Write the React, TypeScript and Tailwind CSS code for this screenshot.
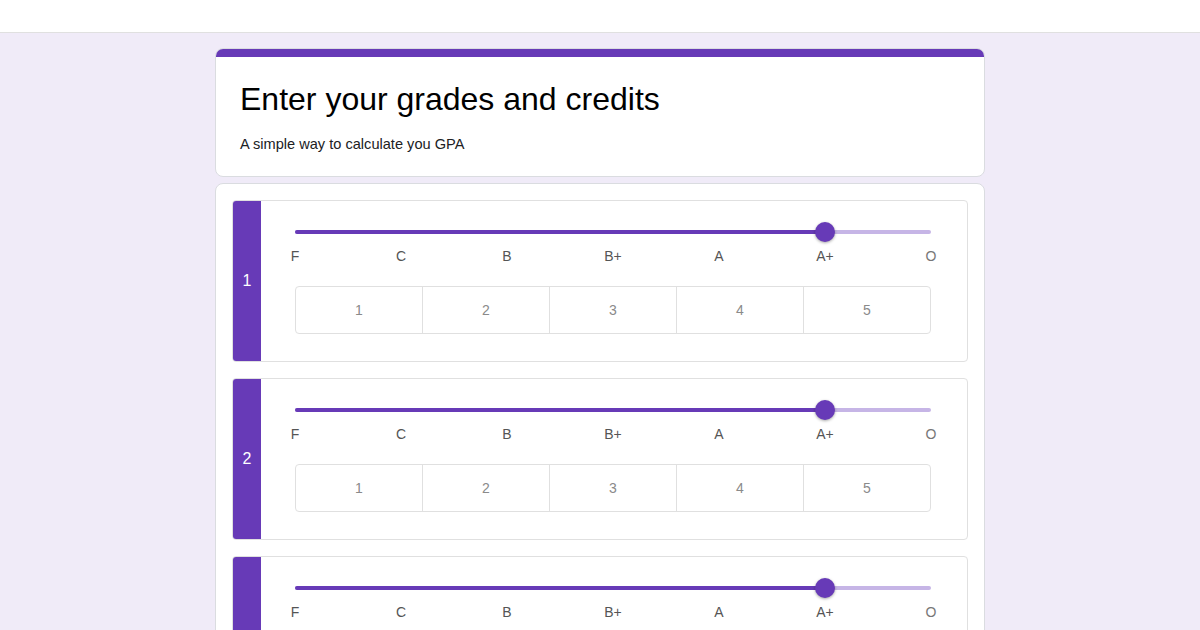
const grades = ["F", "C", "B", "B+", "A", "A+", "O"];
const credits = [1, 2, 3, 4, 5];

function GradeSlider({ value }: { value: number }) {
  const pct = (value / (grades.length - 1)) * 100;
  return (
    <div>
      <div className="relative h-[20px] flex items-center">
        <div className="h-[4px] w-full rounded-full bg-[#c6b5e6]" />
        <div
          className="absolute left-0 h-[4px] rounded-full bg-[#673ab7]"
          style={{ width: `${pct}%` }}
        />
        <div className="absolute inset-x-0 flex justify-between">
          {grades.map((g, i) => (
            <div key={g} className="w-0 flex justify-center">
              <span
                className={
                  i <= value
                    ? "block w-[2px] h-[2px] rounded-full bg-white/70"
                    : "block w-[2px] h-[2px] rounded-full bg-[#673ab7]/60"
                }
              />
            </div>
          ))}
        </div>
        <div
          className="absolute w-[20px] h-[20px] -ml-[10px] rounded-full bg-[#673ab7] shadow-[0_1px_3px_rgba(0,0,0,0.35)]"
          style={{ left: `${pct}%` }}
        />
      </div>
      <div className="flex justify-between mt-[4px]">
        {grades.map((g) => (
          <div key={g} className="w-0 flex justify-center">
            <span
              className={
                g === "O"
                  ? "text-[14px] leading-[20px] text-[#777] whitespace-nowrap"
                  : "text-[14px] leading-[20px] text-[#555] whitespace-nowrap"
              }
            >
              {g}
            </span>
          </div>
        ))}
      </div>
    </div>
  );
}

function CourseCard({ n }: { n: number }) {
  return (
    <div className="flex border border-[#e0e0e0] rounded-[4px] overflow-hidden bg-white h-[162px] shrink-0">
      <div className="w-[28px] bg-[#673ab7] flex items-center justify-center text-white text-[16px]">
        {n}
      </div>
      <div className="flex-1 pl-[34px] pr-[36px] pt-[21px]">
        <GradeSlider value={5} />
        <div className="mt-[20px] flex border border-[#e0e0e0] rounded-[4px] h-[48px]">
          {credits.map((c, i) => (
            <div
              key={c}
              className={
                i === 0
                  ? "flex-1 flex items-center justify-center text-[14px] text-[#8a8a8a]"
                  : "flex-1 flex items-center justify-center text-[14px] text-[#8a8a8a] border-l border-[#e0e0e0]"
              }
            >
              {c}
            </div>
          ))}
        </div>
      </div>
    </div>
  );
}

export default function App() {
  return (
    <div className="h-[630px] overflow-hidden bg-[#f0ebf8] font-['Liberation_Sans',Arial,sans-serif]">
      <div className="h-[33px] bg-white border-b border-[#e0e0e0]" />
      <div className="w-[770px] mx-auto pt-[15px] flex flex-col gap-[6px]">
        <div className="bg-white rounded-[8px] border border-[#dadce0] overflow-hidden">
          <div className="h-[8px] bg-[#673ab7]" />
          <div className="px-[24px] pt-[22px] pb-[22px]">
            <h1 className="text-[32px] leading-[40px] text-black">Enter your grades and credits</h1>
            <p className="mt-[15px] text-[14.6px] leading-[20px] text-[#202124]">
              A simple way to calculate you GPA
            </p>
          </div>
        </div>
        <div className="bg-white rounded-[8px] border border-[#dadce0] p-[16px] flex flex-col gap-[16px]">
          <CourseCard n={1} />
          <CourseCard n={2} />
          <CourseCard n={3} />
        </div>
      </div>
    </div>
  );
}
